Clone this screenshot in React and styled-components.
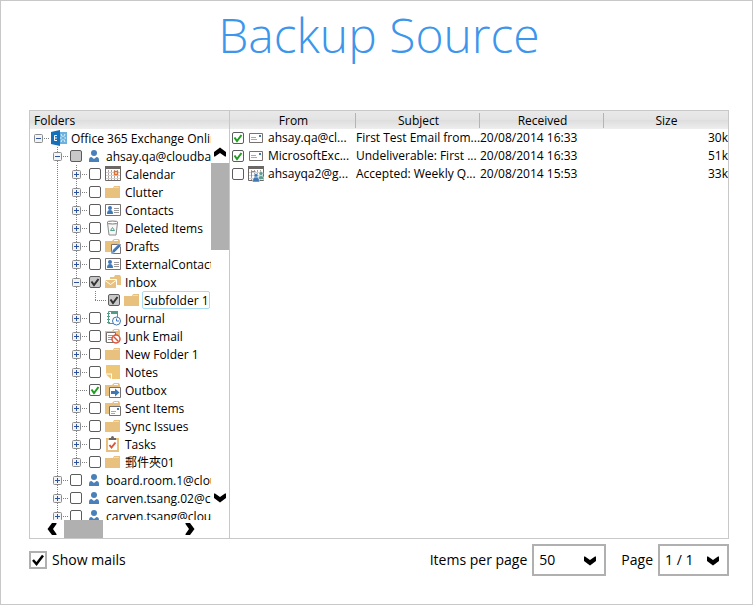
import { useState } from "react";
import styled, { createGlobalStyle } from "styled-components";

const GlobalStyle = createGlobalStyle`
  * {
    box-sizing: border-box;
  }

  body {
    margin: 0;
    background: #fff;
    color: #000;
    font-family: "Open Sans", "Noto Sans CJK TC", sans-serif;
    font-size: 12px;
  }

  button,
  input,
  select {
    margin: 0;
    font: inherit;
    color: inherit;
  }
`;

const Page = styled.main`
  display: flex;
  flex-direction: column;
  height: 100vh;
  min-height: 400px;
  padding: 0 23px 28px 28px;
  border: 1px solid #c8c8c8;
`;

const Title = styled.h1`
  margin: 0 0 41px;
  color: #3c96eb;
  font-size: 48px;
  font-weight: 300;
  line-height: 68px;
  text-align: center;
`;

const Panel = styled.section`
  display: flex;
  flex: 1;
  min-height: 0;
  border: 1px solid #c8c8c8;
`;

const headerFill = `
  height: 18px;
  background: linear-gradient(#e9e9e9, #e3e3e3 50%, #dddddd 50%, #eeeeee);
  font-size: 12px;
  font-weight: 400;
`;

const FolderPane = styled.div`
  display: grid;
  grid-template-columns: 1fr 18px;
  grid-template-rows: 18px minmax(0, 1fr) 18px;
  flex: none;
  width: 200px;
  border-right: 1px solid #c8c8c8;
`;

const PaneHeader = styled.h2`
  ${headerFill}
  grid-column: 1 / -1;
  margin: 0;
  padding-left: 4px;
  line-height: 20px;
`;

const Tree = styled.ul`
  margin: 0;
  padding: 0;
  overflow: hidden;
  list-style: none;
`;

const TreeRow = styled.li`
  display: flex;
  align-items: center;
  height: 18px;
  white-space: nowrap;
`;

const Guide = styled.span`
  display: flex;
  flex: none;
  align-items: center;
  width: 19px;
  height: 18px;
  padding-left: 4px;
`;

const Lines = styled.svg`
  display: block;
  width: 15px;
  height: 18px;
`;

const Expander = styled.button`
  display: flex;
  flex: none;
  width: 15px;
  height: 18px;
  padding: 0;
  border: none;
  background: none;
`;

const CheckLabel = styled.label`
  position: relative;
  display: flex;
  flex: none;
  width: 12px;
  height: 12px;

  svg {
    position: absolute;
    inset: 0;
    pointer-events: none;
  }
`;

const CheckInput = styled.input`
  appearance: none;
  width: 12px;
  height: 12px;
  border: 1px solid #5c5c5c;
  border-radius: 2px;
  background: ${({ $partial }) => ($partial ? "#c8c8c8" : "#fff")};
`;

const IconSlot = styled.span`
  display: flex;
  flex: none;
  justify-content: center;
  width: 16px;
  height: 16px;
`;

const RowBody = styled.span`
  display: flex;
  align-items: center;
  gap: 4px;
  padding-left: 2px;
`;

const FolderName = styled.span`
  height: 18px;
  padding-top: 1px;
  line-height: 18px;
  ${({ $selected }) =>
    $selected &&
    `
    margin-left: -2px;
    padding: 0 0 0 1px;
    border: 1px solid #a6dcf4;
    border-radius: 2px;
  `}
`;

const VerticalBar = styled.div`
  display: flex;
  flex-direction: column;
  align-items: center;
  gap: 2px;
  padding: 14px 0 13px;
`;

const HorizontalBar = styled.div`
  display: flex;
  grid-column: 1 / -1;
  gap: 3px;
  align-items: center;
  padding: 0 30px 0 13px;
`;

const Track = styled.div`
  display: flex;
  flex: 1;
  flex-direction: ${({ $vertical }) => ($vertical ? "column" : "row")};
  align-self: stretch;
`;

const Thumb = styled.div`
  width: ${({ $vertical }) => ($vertical ? "auto" : "34%")};
  height: ${({ $vertical }) => ($vertical ? "27%" : "auto")};
  background: #b0b0b0;
`;

const ArrowButton = styled.button`
  display: flex;
  flex: none;
  align-items: center;
  justify-content: center;
  width: 18px;
  height: 18px;
  padding: 0;
  border: none;
  background: none;
`;

const MailTable = styled.table`
  flex: 1;
  align-self: flex-start;
  width: 0;
  border-collapse: collapse;
  table-layout: fixed;

  thead tr {
    ${headerFill}
  }

  th {
    height: 18px;
    padding: 0;
    font-weight: 400;
  }

  th:first-child {
    width: 126px;
  }

  td {
    height: 18px;
    padding: 0;
    overflow: hidden;
    line-height: 18px;
    white-space: nowrap;
  }

  td:last-child {
    text-align: right;
  }
`;

const ColumnLabel = styled.span`
  display: block;
  height: 15px;
  padding-left: 2px;
  border-right: 1px solid ${({ $last }) => ($last ? "transparent" : "#b4b4b4")};
  line-height: 16px;
`;

const Sender = styled.span`
  display: flex;
  align-items: center;
  gap: 4px;
  padding-left: 2px;
`;

const Footer = styled.footer`
  display: flex;
  align-items: center;
  margin-top: 5px;
  font-size: 14px;
`;

const ShowMails = styled.label`
  position: relative;
  display: flex;
  align-items: center;
  gap: 5px;
  margin-right: auto;

  svg {
    position: absolute;
    left: 3px;
    pointer-events: none;
  }
`;

const BigCheck = styled.input`
  appearance: none;
  width: 18px;
  height: 18px;
  border: 2px solid #b0b0b0;
  background: #fff;
`;

const FooterText = styled.span`
  padding-bottom: 2px;
`;

const PickerLabel = styled.label`
  margin-left: 15px;
  padding-bottom: 2px;
`;

const Picker = styled.span`
  position: relative;
  display: flex;
  width: ${({ $width }) => $width}px;
  margin-left: 5px;

  svg {
    position: absolute;
    top: 10px;
    right: 9px;
    pointer-events: none;
  }
`;

const Select = styled.select`
  appearance: none;
  width: 100%;
  height: 32px;
  padding: 0 5px 2px;
  border: 2px solid #b0b0b0;
  border-radius: 0;
  background: #fff;
`;

const angles = { down: 0, left: 90, up: 180, right: 270 };

const Chevron = ({ to }) => (
  <svg width="14" height="14" viewBox="0 0 14 14" aria-hidden="true">
    <path
      d="M1 2.5h1L7 6l5-3.5h1V7l-6 4.500L1 7z"
      transform={`rotate(${angles[to]} 7 7)`}
    />
  </svg>
);

const folderFill = "#e9c17f";

const Folder = () => (
  <>
    <path d="M0 4h8l1-2h6v12H0z" fill={folderFill} />
    <path d="M9 3.5h5" stroke="#f3dcb2" />
  </>
);

const BackFolder = () => (
  <>
    <path d="M0 3h7l2-2h5l1 2v11H0z" fill={folderFill} />
    <path d="M9 2.5h4" stroke="#fff" />
  </>
);

const CalendarGrid = () => (
  <>
    <path d="M0.5 1.5h15v13h-15z" fill="#fff" stroke="#6c6664" />
    <path d="M0 0h16v3H0z" fill="#6c6664" />
    <path
      d="M3.5 4v10M6.5 4v10M9.5 4v10M12.5 4v10"
      stroke="#a8a3a1"
      strokeDasharray="2 1"
    />
    <path d="M1 6.500h14M1 9.500h14M1 12.500h14" stroke="#d6d2d0" />
  </>
);

const Envelope = () => (
  <>
    <path d="M1.500 3.500h13v9h-13z" fill="#fff" stroke="#77716f" />
    <path d="M3 7.500h5M3 9.500h6" stroke="#aaa" />
    <path d="M11 5h2v2h-2z" fill="#3f78b5" />
  </>
);

const icons = {
  exchange: (
    <>
      <path d="M8 2h8v12H8z" fill="#6db1de" />
      <path d="M10 4l4 8M14 4l-4 8M9 8h6" fill="none" stroke="#e6f3fb" />
      <circle cx="12" cy="8" r="1.500" fill="#6db1de" />
      <path d="M0 2L9 0v16L0 14z" fill="#1470b8" />
      <path d="M6 5.500H3.500v5H6M3.500 8H6" fill="none" stroke="#fff" />
    </>
  ),
  person: (
    <g fill="#4a80ba">
      <circle cx="8" cy="5" r="3" />
      <path d="M3 14v-2q0-3 2.500-3L8 11l2.500-2Q13 9 13 12v2z" />
    </g>
  ),
  calendar: (
    <>
      <CalendarGrid />
      <path d="M9.500 5.500h3v3h-3z" fill="#fff" stroke="#e0702f" strokeWidth="1.500" />
    </>
  ),
  folder: <Folder />,
  contacts: (
    <>
      <path d="M0.500 2.500h15v11h-15z" fill="#fff" stroke="#77716f" />
      <circle cx="5" cy="6" r="2" fill="#3f78b5" />
      <path d="M2 12q0-4 3-4t3 4z" fill="#3f78b5" />
      <path d="M9 6.500h5M9 8.500h5M9 10.500h5" stroke="#9a9a9a" />
    </>
  ),
  trash: (
    <>
      <path d="M2.500 3l1.500 12h7l1.500-12z" fill="#f7f7f7" stroke="#8a8a8a" />
      <ellipse cx="7.500" cy="2.500" rx="5.500" ry="1.500" fill="#fff" stroke="#777" />
      <path d="M5.500 10.500l2-3 2 3z" fill="none" stroke="#4fa58a" />
    </>
  ),
  drafts: (
    <>
      <BackFolder />
      <path d="M6.500 6.500h9v9h-9z" fill="#fff" stroke="#77716f" />
      <path d="M6.500 15.500l1-3.500 6.500-6.500 2 2.500-6.500 6.500z" fill="#3f78b5" stroke="#fff" strokeWidth="0.500" />
    </>
  ),
  inbox: (
    <>
      <path d="M5 3h4l1-2h5l1 2v8H5z" fill={folderFill} />
      <path d="M0 6h11v8H0z" fill={folderFill} />
      <path d="M0 6.500l5.500 4 5.500-4M0 5.500h11.500V14" fill="none" stroke="#fff" />
    </>
  ),
  journal: (
    <>
      <path d="M3.500 1.500h9v12h-9z" fill="#fff" stroke="#4e9f87" />
      <path d="M6 1h7v3H6z" fill="#4e9f87" />
      <path d="M2 3.500h3M2 6.500h3M2 9.500h3M2 12.500h3" stroke="#4e9f87" />
      <circle cx="11.500" cy="11" r="4" fill="#fff" stroke="#3f78b5" />
      <path d="M11.500 8.500V11H14" fill="none" stroke="#3f78b5" />
    </>
  ),
  junk: (
    <>
      <BackFolder />
      <path d="M1.500 4.500h9v10h-9z" fill="#fff" stroke="#77716f" />
      <path d="M3 7.500h5M3 9.500h4M3 11.500h4" stroke="#999" />
      <circle cx="11" cy="11" r="4" fill="#fff" stroke="#d9553b" strokeWidth="1.500" />
      <path d="M8.500 8.500l5 5" stroke="#d9553b" strokeWidth="1.500" />
    </>
  ),
  notes: (
    <>
      <path d="M1 1h14v14H7V9.500H1z" fill="#edc678" />
      <path d="M1 10.500h5V15z" fill="#edc678" />
    </>
  ),
  outbox: (
    <>
      <BackFolder />
      <path d="M4.500 5.500h11v10h-11z" fill="#fff" stroke="#77716f" />
      <path d="M6 9h4V6.500l4.500 4-4.500 4V12H6z" fill="#3f78b5" />
    </>
  ),
  sent: (
    <>
      <BackFolder />
      <path d="M4.500 6.500h11v9h-11z" fill="#fff" stroke="#77716f" />
      <path d="M6 11.500h5M6 13.500h4" stroke="#aaa" />
      <path d="M12 8h2v2h-2z" fill="#3f78b5" />
    </>
  ),
  tasks: (
    <>
      <path d="M1 2h13v14H1z" fill={folderFill} />
      <path d="M3 4h9v10H3z" fill="#fff" />
      <path d="M4 4V2h2q0-2 1.500-2T9 2h2v2z" fill="#6c6664" />
      <path d="M4.500 9l2 2.500 4-5" fill="none" stroke="#d9553b" strokeWidth="2" />
    </>
  ),
  mail: <Envelope />,
  meeting: (
    <>
      <CalendarGrid />
      <path d="M7.500 5.500h-4v5" fill="none" stroke="#e0702f" />
      <g stroke="#fff" strokeWidth="0.500">
        <circle cx="13" cy="7.500" r="2" fill="#5a9c90" />
        <path d="M10 13.500q0-4 3-4t3 4z" fill="#5a9c90" />
        <circle cx="8" cy="9.500" r="2" fill="#3f78b5" />
        <path d="M4.500 16q0-5 3.500-5t3.500 5z" fill="#3f78b5" />
      </g>
    </>
  ),
};

const Icon = ({ name }) => (
  <IconSlot>
    <svg width="16" height="16" viewBox="0 0 16 16" aria-hidden="true">
      {icons[name]}
    </svg>
  </IconSlot>
);

const folders = [
  { name: "Office 365 Exchange Online", level: 0, icon: "exchange", open: true },
  { name: "ahsay.qa@cloudbackup", level: 1, icon: "person", open: true, check: "partial" },
  { name: "Calendar", level: 2, icon: "calendar" },
  { name: "Clutter", level: 2, icon: "folder" },
  { name: "Contacts", level: 2, icon: "contacts" },
  { name: "Deleted Items", level: 2, icon: "trash" },
  { name: "Drafts", level: 2, icon: "drafts" },
  { name: "ExternalContacts", level: 2, icon: "contacts" },
  { name: "Inbox", level: 2, icon: "inbox", open: true, check: "grey" },
  { name: "Subfolder 1", level: 3, icon: "folder", leaf: true, last: true, check: "grey", selected: true },
  { name: "Journal", level: 2, icon: "journal" },
  { name: "Junk Email", level: 2, icon: "junk" },
  { name: "New Folder 1", level: 2, icon: "folder" },
  { name: "Notes", level: 2, icon: "notes" },
  { name: "Outbox", level: 2, icon: "outbox", leaf: true, check: "full" },
  { name: "Sent Items", level: 2, icon: "sent" },
  { name: "Sync Issues", level: 2, icon: "folder" },
  { name: "Tasks", level: 2, icon: "tasks" },
  { name: "郵件夾01", level: 2, icon: "folder", last: true },
  { name: "board.room.1@cloudbackup", level: 1, icon: "person" },
  { name: "carven.tsang.02@cloudbackup", level: 1, icon: "person" },
  { name: "carven.tsang@cloudbackup", level: 1, icon: "person" },
];

const mails = [
  { from: "ahsay.qa@cl...", subject: "First Test Email from...", received: "20/08/2014 16:33", size: "30k", icon: "mail", check: "full" },
  { from: "MicrosoftExc...", subject: "Undeliverable: First ...", received: "20/08/2014 16:33", size: "51k", icon: "mail", check: "full" },
  { from: "ahsayqa2@g...", subject: "Accepted: Weekly Q...", received: "20/08/2014 15:53", size: "33k", icon: "meeting" },
];

const Tick = ({ color }) => (
  <svg width="12" height="12" viewBox="0 0 12 12" aria-hidden="true">
    <path d="M2.500 5.500l2.500 3.500 4.500-6" fill="none" stroke={color} strokeWidth="2" />
  </svg>
);

const CheckBox = ({ check, label }) => {
  const [checked, setChecked] = useState(check === "full" || check === "grey");
  const partial = check === "grey" || check === "partial";

  return (
    <CheckLabel>
      <CheckInput
        type="checkbox"
        aria-label={label}
        checked={checked}
        $partial={partial}
        onChange={() => setChecked(!checked)}
      />
      {checked && <Tick color={partial ? "#333" : "#1e9e1e"} />}
    </CheckLabel>
  );
};

const dots = { stroke: "#808080", strokeDasharray: "1 1" };

const Branch = ({ level, leaf, open, last }) => (
  <Lines viewBox="0 0 15 18" aria-hidden="true">
    {level > 0 && <path d={last ? "M4.500 0v9" : "M4.500 0v18"} {...dots} />}
    <path d={leaf ? "M4 9.500h11" : "M10 9.500h5"} {...dots} />
    {!leaf && (
      <>
        <rect x="0.500" y="5.500" width="8" height="8" rx="1" fill="#f4f4f4" stroke="#8c8c8c" />
        <path d={open ? "M2 9.500h5" : "M2 9.500h5M4.500 7v5"} stroke="#2c52a0" />
      </>
    )}
  </Lines>
);

const FolderRow = ({ folder }) => {
  const { name, level, icon, leaf, open, check, selected } = folder;
  const guides = Array.from({ length: level }, (_, i) => i);

  return (
    <TreeRow>
      {guides.map((i) => (
        <Guide key={i}>
          {/* the root has no siblings, so its column stays empty */}
          {i > 0 && (
            <Lines viewBox="0 0 15 18" aria-hidden="true">
              <path d="M4.500 0v18" {...dots} />
            </Lines>
          )}
        </Guide>
      ))}
      <Guide>
        {leaf ? (
          <Branch {...folder} />
        ) : (
          <Expander type="button" aria-label={`${open ? "Collapse" : "Expand"} ${name}`}>
            <Branch {...folder} />
          </Expander>
        )}
      </Guide>
      <RowBody>
        {level > 0 && <CheckBox check={check} label={name} />}
        <Icon name={icon} />
        <FolderName $selected={selected}>{name}</FolderName>
      </RowBody>
    </TreeRow>
  );
};

const columns = ["From", "Subject", "Received", "Size"];

const App = () => {
  const [showMails, setShowMails] = useState(true);

  return (
    <>
      <GlobalStyle />
      <Page>
        <Title>Backup Source</Title>
        <Panel>
          <FolderPane>
            <PaneHeader>Folders</PaneHeader>
            <Tree>
              {folders.map((folder) => (
                <FolderRow key={folder.name} folder={folder} />
              ))}
            </Tree>
            <VerticalBar>
              <ArrowButton type="button" aria-label="Scroll up">
                <Chevron to="up" />
              </ArrowButton>
              <Track $vertical>
                <Thumb $vertical />
              </Track>
              <ArrowButton type="button" aria-label="Scroll down">
                <Chevron to="down" />
              </ArrowButton>
            </VerticalBar>
            <HorizontalBar>
              <ArrowButton type="button" aria-label="Scroll left">
                <Chevron to="left" />
              </ArrowButton>
              <Track>
                <Thumb />
              </Track>
              <ArrowButton type="button" aria-label="Scroll right">
                <Chevron to="right" />
              </ArrowButton>
            </HorizontalBar>
          </FolderPane>
          <MailTable>
            <thead>
              <tr>
                {columns.map((column) => (
                  <th key={column} scope="col">
                    <ColumnLabel $last={column === "Size"}>{column}</ColumnLabel>
                  </th>
                ))}
              </tr>
            </thead>
            <tbody>
              {mails.map((mail) => (
                <tr key={mail.from}>
                  <td>
                    <Sender>
                      <CheckBox check={mail.check} label={mail.from} />
                      <Icon name={mail.icon} />
                      {mail.from}
                    </Sender>
                  </td>
                  <td>{mail.subject}</td>
                  <td>{mail.received}</td>
                  <td>{mail.size}</td>
                </tr>
              ))}
            </tbody>
          </MailTable>
        </Panel>
        <Footer>
          <ShowMails>
            <BigCheck
              type="checkbox"
              checked={showMails}
              onChange={() => setShowMails(!showMails)}
            />
            {showMails && (
              <svg width="12" height="12" viewBox="0 0 12 12" aria-hidden="true">
                <path d="M1 6l3.500 4L11 1.500" fill="none" stroke="#000" strokeWidth="2.500" />
              </svg>
            )}
            <FooterText>Show mails</FooterText>
          </ShowMails>
          <PickerLabel htmlFor="per-page">Items per page</PickerLabel>
          <Picker $width={74}>
            <Select id="per-page">
              <option>50</option>
            </Select>
            <Chevron to="down" />
          </Picker>
          <PickerLabel htmlFor="page">Page</PickerLabel>
          <Picker $width={71}>
            <Select id="page">
              <option>1 / 1</option>
            </Select>
            <Chevron to="down" />
          </Picker>
        </Footer>
      </Page>
    </>
  );
};

export default App;
